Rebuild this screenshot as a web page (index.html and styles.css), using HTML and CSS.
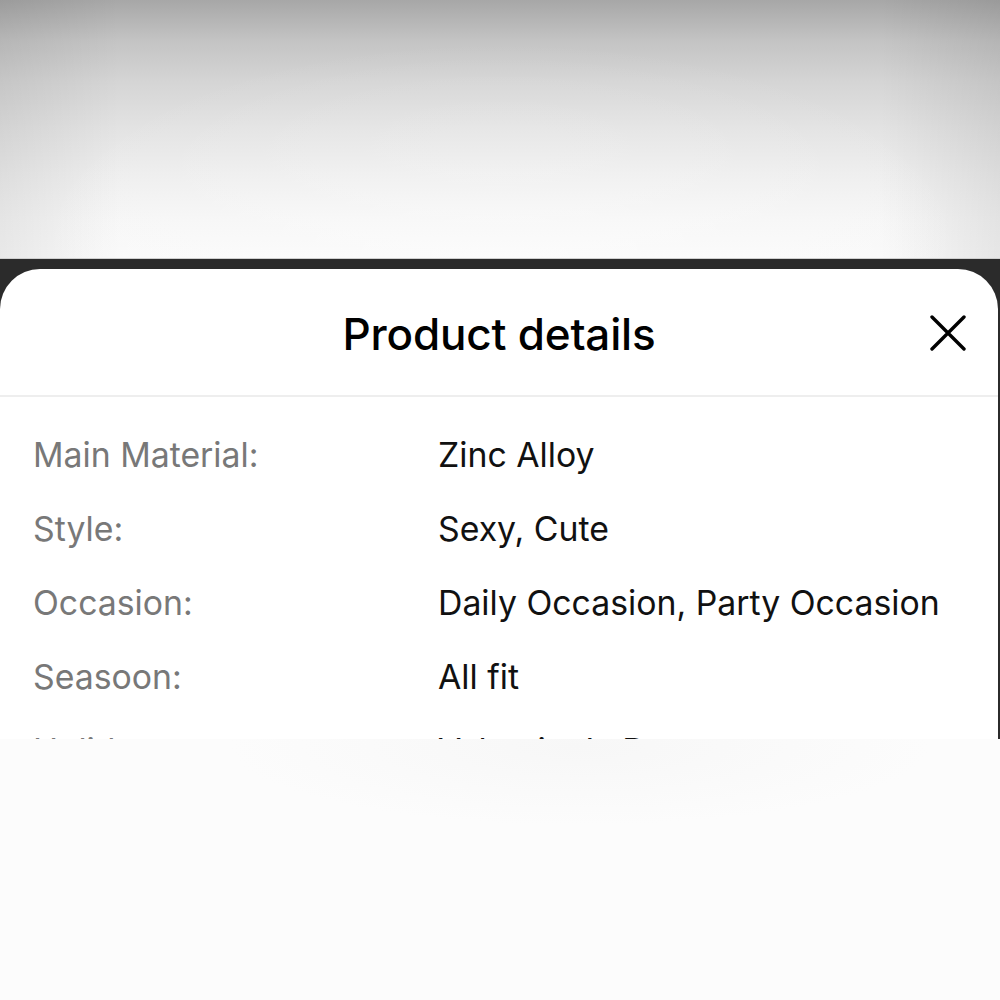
FILE: index.html
```html
<!DOCTYPE html>
<html lang="en">
<head>
<meta charset="utf-8">
<title>Product details</title>
<link rel="stylesheet" href="styles.css">
</head>
<body>
<div class="page">
  <div class="backdrop"></div>
  <div class="stage">
    <section class="sheet">
      <header class="sheet-header">
        <h1 class="sheet-title">Product details</h1>
        <button class="close" aria-label="Close">
          <svg viewBox="0 0 36 36" width="36" height="36" aria-hidden="true">
            <path d="M2 2 L34 34 M34 2 L2 34" stroke="#000" stroke-width="3.4" stroke-linecap="round" fill="none"/>
          </svg>
        </button>
      </header>
      <div class="divider"></div>
      <dl class="specs">
        <dt class="label">Main Material:</dt><dd class="value">Zinc Alloy</dd>
        <dt class="label">Style:</dt><dd class="value">Sexy, Cute</dd>
        <dt class="label">Occasion:</dt><dd class="value">Daily Occasion, Party Occasion</dd>
        <dt class="label">Seasoon:</dt><dd class="value">All fit</dd>
        <dt class="label">Holiday:</dt><dd class="value">Valentine's Day</dd>
      </dl>
    </section>
  </div>
  <div class="floor"></div>
</div>
</body>
</html>
```
FILE: styles.css
```css
* { box-sizing: border-box; }
html, body { margin: 0; padding: 0; }
body {
  font-family: Inter, "Noto Sans", "Liberation Sans", sans-serif;
  background: #fbfbfb;
}
.page {
  width: 1000px;
  height: 1000px;
  display: flex;
  flex-direction: column;
  overflow: hidden;
}
.backdrop {
  height: 259px;
  flex: none;
  background:
    radial-gradient(ellipse 70% 120% at 50% 100%, rgba(255,255,255,0.35), rgba(255,255,255,0) 70%),
    linear-gradient(90deg, rgba(0,0,0,0.07), rgba(0,0,0,0) 12%, rgba(0,0,0,0) 88%, rgba(0,0,0,0.08)),
    linear-gradient(#a7a7a7 0%, #c4c4c4 16%, #d5d5d5 32%, #e3e3e3 50%, #eeeeee 68%, #f6f6f6 85%, #fafafa 100%);
  border-bottom: 1px solid #cfcfcf;
}
.stage {
  height: 480px;
  flex: none;
  background: #2b2b2b;
  padding-top: 10px;
  overflow: hidden;
}
.sheet {
  height: 100%;
  margin-right: 2px;
  background: #ffffff;
  border-radius: 40px 40px 0 0;
  overflow: hidden;
}
.sheet-header {
  position: relative;
  height: 126px;
  display: flex;
  align-items: center;
  justify-content: center;
}
.sheet-title {
  margin: 0;
  padding-top: 4px;
  font-size: 44px;
  font-weight: 500;
  color: #000;
  letter-spacing: -0.2px;
}
.close {
  position: absolute;
  right: 32px;
  top: 46px;
  width: 36px;
  height: 36px;
  padding: 0;
  border: 0;
  background: none;
  display: flex;
}
.divider {
  height: 2px;
  background: #eeeeee;
}
.specs {
  margin: 0;
  padding: 21px 0 0 33px;
  display: grid;
  grid-template-columns: 405px 1fr;
  grid-auto-rows: 74px;
  align-items: center;
  font-size: 33.8px;
  line-height: 74px;
}
.label {
  color: #787878;
  margin: 0;
}
.value {
  color: #111111;
  margin: 0;
}
.floor {
  flex: 1;
  background:
    radial-gradient(ellipse 35% 30% at 58% 3%, #f7f7f7, rgba(247,247,247,0) 100%),
    #fcfcfc;
}
```
